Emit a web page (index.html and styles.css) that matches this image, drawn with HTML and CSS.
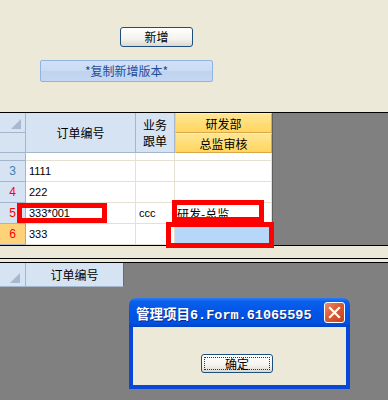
FILE: index.html
```html
<!DOCTYPE html>
<html lang="zh-CN">
<head>
  <meta charset="UTF-8">
  <title>订单</title>
  <link rel="stylesheet" href="styles.css">
</head>
<body>
  <div class="top">
    <button class="btn-new">新增</button>
    <button class="btn-copy">*复制新增版本*</button>
  </div>

  <div class="sheet-wrap">
    <div class="sheet">
      <div class="corner"><span class="tri"></span></div>
      <div class="hd span2">订单编号</div>
      <div class="hd span2 two-line"><span>业务</span><span>跟单</span></div>
      <div class="hd-y">研发部</div>
      <div class="corner"></div>
      <div class="hd-y">总监审核</div>

      <div class="rh"></div>
      <div class="cell"></div>
      <div class="cell"></div>
      <div class="cell"></div>

      <div class="rh num-blue">3</div>
      <div class="cell">1111</div>
      <div class="cell"></div>
      <div class="cell"></div>

      <div class="rh num-red">4</div>
      <div class="cell">222</div>
      <div class="cell"></div>
      <div class="cell"></div>

      <div class="rh num-red">5</div>
      <div class="cell">333*001</div>
      <div class="cell">ccc</div>
      <div class="cell cjk">研发-总监</div>

      <div class="rh num-red rh-sel">6</div>
      <div class="cell">333</div>
      <div class="cell"></div>
      <div class="cell cell-sel"></div>
    </div>
    <div class="sheet-rest"></div>
  </div>

  <div class="gap"></div>
  <div class="gap2"></div>

  <div class="sheet2">
    <div class="corner2"><span class="tri"></span></div>
    <div class="hd2">订单编号</div>
  </div>

  <!-- annotation boxes -->
  <div class="mark mark-a"></div>
  <div class="mark mark-b"></div>
  <div class="mark mark-c"></div>

  <div class="dialog">
    <div class="dlg-title">
      <span class="dlg-text">管理项目6.Form.61065595</span>
      <span class="dlg-close">
        <svg width="13" height="13" viewBox="0 0 13 13">
          <path d="M2 2 L11 11 M11 2 L2 11" stroke="#fff" stroke-width="2.2" stroke-linecap="square"/>
        </svg>
      </span>
    </div>
    <div class="dlg-body">
      <button class="btn-ok"><span class="focus">确定</span></button>
    </div>
  </div>
</body>
</html>
```

FILE: styles.css
```css
body {
  margin: 0;
  width: 388px;
  height: 400px;
  overflow: hidden;
  background: #808080;
  font-family: "Noto Sans CJK SC", sans-serif;
  font-size: 12px;
  position: relative;
}

.top {
  box-sizing: border-box;
  height: 113px;
  background: #ECE9D8;
  border-bottom: 1px solid #000;
  padding-top: 27px;
  display: flex;
  flex-direction: column;
  align-items: flex-start;
}

.btn-new {
  margin-left: 120px;
  width: 73px;
  height: 20px;
  padding: 0;
  border: 1px solid #1C4F7F;
  border-radius: 3px;
  background: linear-gradient(#ffffff, #f4f3ee 60%, #dcd8cc);
  font-family: "Noto Sans CJK SC", sans-serif;
  font-size: 12px;
  line-height: 18px;
  color: #000;
}

.btn-copy {
  margin-left: 40px;
  margin-top: 13px;
  width: 173px;
  height: 22px;
  padding: 0;
  border: 1px solid #91B3E2;
  border-radius: 2px;
  background: linear-gradient(#D2E1F7, #CADBF4 50%, #BFD3F0 52%, #C5D7F2);
  font-family: "Noto Sans CJK SC", sans-serif;
  font-size: 12px;
  line-height: 20px;
  color: #1F4C98;
}

.sheet-wrap {
  display: flex;
  height: 132px;
}

.sheet {
  display: grid;
  grid-template-columns: 26px 110px 39px 97px;
  grid-template-rows: 20px 20px 8px repeat(4, 21px);
  background: #fff;
}

.sheet > div {
  box-sizing: border-box;
  border-right: 1px solid #E4E1D3;
  border-bottom: 1px solid #E4E1D3;
  white-space: nowrap;
  overflow: hidden;
}

.sheet > .corner,
.sheet > .hd,
.sheet > .rh {
  background: #D6E3F3;
  border-right-color: #A3B6CC;
  border-bottom-color: #A3B6CC;
}

.corner {
  display: flex;
  justify-content: flex-end;
  align-items: flex-end;
  padding: 0 4px 3px 0;
}

.tri {
  width: 0;
  height: 0;
  border-left: 10px solid transparent;
  border-bottom: 10px solid #A8B8CE;
}

.hd {
  display: flex;
  align-items: center;
  justify-content: center;
  color: #000;
}

.span2 {
  grid-row: span 2;
}

.sheet > .two-line {
  flex-direction: column;
}

.two-line span {
  display: block;
  line-height: 16px;
}

.sheet > .hd-y {
  display: flex;
  align-items: center;
  justify-content: center;
  background: linear-gradient(#FFE593, #FFD65E);
  border: 1px solid #DDA646;
  border-top-color: #FFF0B8;
  border-left-color: #F6CF7A;
}

.rh {
  display: flex;
  align-items: center;
  justify-content: center;
  font-family: "Liberation Sans", sans-serif;
  font-size: 12px;
}

.num-blue {
  color: #3F7DB8;
}

.num-red {
  color: #FF0000;
}

.sheet > .rh-sel {
  background: #FFD27A;
  border-right-color: #D8A548;
}

.cell {
  display: flex;
  align-items: center;
  padding: 0 3px;
  font-family: "Liberation Sans", sans-serif;
  font-size: 11px;
  color: #000;
}

.cjk {
  font-family: "Noto Sans CJK SC", sans-serif;
  font-size: 12px;
  padding-left: 2px;
}

.sheet > .cell-sel {
  background: #B7D7F8;
}

.sheet-rest {
  flex: 1;
  border-left: 1px solid #5F5F5F;
  background: #808080;
}

.gap {
  box-sizing: border-box;
  height: 14px;
  background: #ECE9D8;
  border-top: 1px solid #000;
  border-bottom: 1px solid #000;
}

.gap2 {
  box-sizing: border-box;
  height: 4px;
  background: #ECE9D8;
  border-bottom: 1px solid #000;
}

.sheet2 {
  display: flex;
  height: 24px;
}

.corner2,
.hd2 {
  box-sizing: border-box;
  background: #D6E3F3;
  border-right: 1px solid #A3B6CC;
  border-bottom: 1px solid #A3B6CC;
}

.corner2 {
  width: 26px;
  display: flex;
  justify-content: flex-end;
  align-items: flex-end;
  padding: 0 5px 3px 0;
}

.hd2 {
  width: 98px;
  display: flex;
  align-items: center;
  justify-content: center;
  border-right-color: #6B6B6B;
}

.mark {
  position: absolute;
  box-sizing: border-box;
  border: 5px solid #FF0000;
}

.mark-a {
  left: 17px;
  top: 203px;
  width: 90px;
  height: 20px;
}

.mark-b {
  left: 172px;
  top: 200px;
  width: 92px;
  height: 22px;
}

.mark-c {
  left: 166px;
  top: 222px;
  width: 108px;
  height: 26px;
}

.dialog {
  position: absolute;
  left: 129px;
  top: 298px;
  width: 221px;
  height: 91px;
  display: flex;
  flex-direction: column;
}

.dlg-title {
  height: 29px;
  border-radius: 7px 7px 0 0;
  background: linear-gradient(#2C7BF6 0%, #0A5FEB 12%, #0055E6 50%, #0251E0 85%, #0043C6 100%);
  display: flex;
  align-items: center;
  justify-content: space-between;
  padding: 0 5px 0 7px;
}

.dlg-text {
  font-family: "Liberation Mono", "Noto Sans CJK SC", monospace;
  font-size: 13.5px;
  font-weight: bold;
  color: #fff;
  text-shadow: 1px 1px 0 #0A2A8C;
}

.dlg-close {
  width: 21px;
  height: 21px;
  box-sizing: border-box;
  border: 1px solid #fff;
  border-radius: 3px;
  background: linear-gradient(135deg, #EE8B68, #DC5A33 45%, #C7411C);
  display: flex;
  align-items: center;
  justify-content: center;
}

.dlg-body {
  flex: 1;
  background: #ECE9D8;
  border: 4px solid #0848D8;
  border-top: none;
  padding: 27px 0 0 68px;
}

.btn-ok {
  width: 72px;
  height: 19px;
  padding: 2px;
  border: 1px solid #1C4F7F;
  border-radius: 3px;
  background: linear-gradient(#ffffff, #f4f3ee 60%, #dcd8cc);
  font-family: "Noto Sans CJK SC", sans-serif;
  font-size: 12px;
  color: #000;
  display: flex;
}

.focus {
  flex: 1;
  border: 1px dotted #333;
  line-height: 11px;
  display: flex;
  align-items: center;
  justify-content: center;
}
```
